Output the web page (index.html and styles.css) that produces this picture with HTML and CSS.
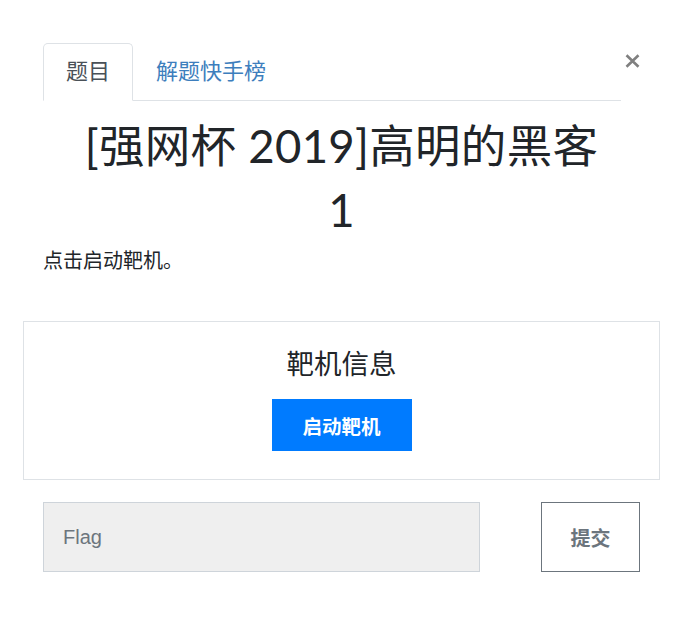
FILE: index.html
```html
<!DOCTYPE html>
<html lang="zh-CN">
<head>
<meta charset="utf-8">
<title>[强网杯 2019]高明的黑客</title>
<link rel="stylesheet" href="styles.css">
</head>
<body>
<div class="modal">
  <div class="header">
    <ul class="nav">
      <li class="tab active">题目</li>
      <li class="tab link">解题快手榜</li>
    </ul>
    <div class="close" aria-label="Close">
      <svg width="15" height="14" viewBox="0 0 15 14"><path d="M1.5 1.2 L13.5 12.8 M13.5 1.2 L1.5 12.8" stroke="#808080" stroke-width="2.6" fill="none"/></svg>
    </div>
  </div>
  <div class="title">
    <div class="name">[强网杯 2019]高明的黑客</div>
    <div class="value">1</div>
  </div>
  <p class="desc">点击启动靶机。</p>
  <div class="card">
    <div class="card-title">靶机信息</div>
    <button class="btn-start">启动靶机</button>
  </div>
  <div class="form-row">
    <input class="flag" type="text" placeholder="Flag">
    <button class="btn-submit">提交</button>
  </div>
</div>
</body>
</html>
```
FILE: styles.css
```css
html, body {
  margin: 0;
  padding: 0;
  background: #fff;
}
body {
  font-family: "Liberation Sans", "Noto Sans CJK SC", sans-serif;
  color: #212529;
}
.modal {
  width: 683px;
  padding: 43px 43px 0 43px;
  box-sizing: border-box;
}
.header {
  display: flex;
  align-items: flex-start;
}
.nav {
  flex: 1;
  display: flex;
  list-style: none;
  margin: 0;
  padding: 0;
  border-bottom: 1px solid #dee2e6;
}
.tab {
  font-size: 22px;
  line-height: 33px;
  padding: 11px 22px 12px;
  border: 1px solid transparent;
  border-top-left-radius: 5px;
  border-top-right-radius: 5px;
  margin-bottom: -1px;
}
.tab.active {
  color: #495057;
  background: #fff;
  border-color: #dee2e6 #dee2e6 #fff;
}
.tab.link {
  color: #3d7ebd;
}
.close {
  width: 19px;
  display: flex;
  justify-content: flex-end;
  padding-top: 11px;
}
.close svg {
  display: block;
}
.title {
  text-align: center;
  font-family: "Lato", "Noto Sans CJK SC", sans-serif;
  font-size: 45.5px;
  letter-spacing: 0.3px;
  line-height: 64px;
  margin-top: 13px;
  color: #212529;
}
.desc {
  margin: 4px 0 0 0;
  font-size: 20px;
  line-height: 30px;
  color: #212529;
}
.card {
  margin: 45px -20px 0;
  border: 1px solid #dee2e6;
  padding: 26px 0 28px;
  text-align: center;
}
.card-title {
  font-size: 27.5px;
  line-height: 33px;
  color: #212529;
}
.btn-start {
  margin-top: 18px;
  width: 140px;
  height: 52px;
  border: none;
  background: #007bff;
  color: #fff;
  font-family: "Liberation Sans", "Noto Sans CJK SC", sans-serif;
  font-weight: 700;
  font-size: 19.5px;
  padding: 0;
}
.form-row {
  display: flex;
  justify-content: space-between;
  margin-top: 22px;
}
.flag {
  width: 437px;
  height: 70px;
  box-sizing: border-box;
  border: 1px solid #ced4da;
  background: #efefef;
  padding: 0 19px;
  font-family: "Liberation Sans", "Noto Sans CJK SC", sans-serif;
  font-size: 20px;
  color: #495057;
  outline: none;
}
.flag::placeholder {
  color: #6c757d;
}
.btn-submit {
  width: 99px;
  height: 70px;
  box-sizing: border-box;
  border: 1px solid #6c757d;
  background: #fff;
  color: #6c757d;
  font-family: "Liberation Sans", "Noto Sans CJK SC", sans-serif;
  font-weight: 700;
  font-size: 20px;
  padding: 0;
}
```
